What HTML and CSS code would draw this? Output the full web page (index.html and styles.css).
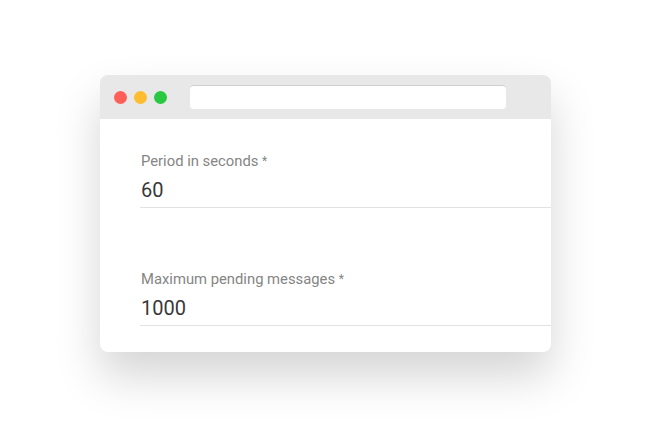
FILE: index.html
```
<!DOCTYPE html>
<html>
<head>
<meta charset="utf-8">
<link rel="stylesheet" href="styles.css">
</head>
<body>
<div class="window">
  <div class="titlebar">
    <span class="dot red"></span>
    <span class="dot yellow"></span>
    <span class="dot green"></span>
    <div class="address"></div>
  </div>
  <div class="content">
    <div class="field">
      <div class="label">Period in seconds <span class="req">*</span></div>
      <div class="value">60</div>
    </div>
    <div class="field">
      <div class="label">Maximum pending messages <span class="req">*</span></div>
      <div class="value">1000</div>
    </div>
  </div>
</div>
</body>
</html>
```

FILE: styles.css
```
html, body {
  margin: 0;
  padding: 0;
  background: #ffffff;
}
body {
  min-height: 427px;
  box-sizing: border-box;
  padding-top: 75px;
  padding-left: 100px;
  font-family: Roboto, "Liberation Sans", sans-serif;
}
.window {
  width: 451px;
  height: 277px;
  box-sizing: border-box;
  background: #ffffff;
  border-radius: 8px;
  overflow: hidden;
  box-shadow: 0 24px 45px rgba(0, 0, 0, 0.17);
}
.titlebar {
  height: 44px;
  background: #e8e8e8;
  display: flex;
  align-items: center;
  padding-left: 14px;
  box-sizing: border-box;
}
.dot {
  width: 13px;
  height: 13px;
  border-radius: 50%;
  margin-right: 7px;
  flex: none;
}
.red { background: #fe5f57; }
.yellow { background: #febc2e; }
.green { background: #28c840; }
.address {
  margin-left: 16px;
  width: 316px;
  height: 24px;
  background: #ffffff;
  border-radius: 4px;
  box-sizing: border-box;
  border-top: 1px solid #cfcfcf;
}
.content {
  padding: 34px 0 0 40px;
  display: flex;
  flex-direction: column;
  gap: 63px;
}
.field {
  border-bottom: 1px solid #e2e2e2;
  padding-bottom: 5px;
}
.label {
  font-size: 14.8px;
  line-height: 16px;
  color: #858585;
  padding-left: 1px;
}
.req {
  font-size: 12px;
  vertical-align: 1px;
}
.value {
  margin-top: 9px;
  font-size: 20px;
  line-height: 24px;
  color: #383838;
  padding-left: 1px;
}
```
